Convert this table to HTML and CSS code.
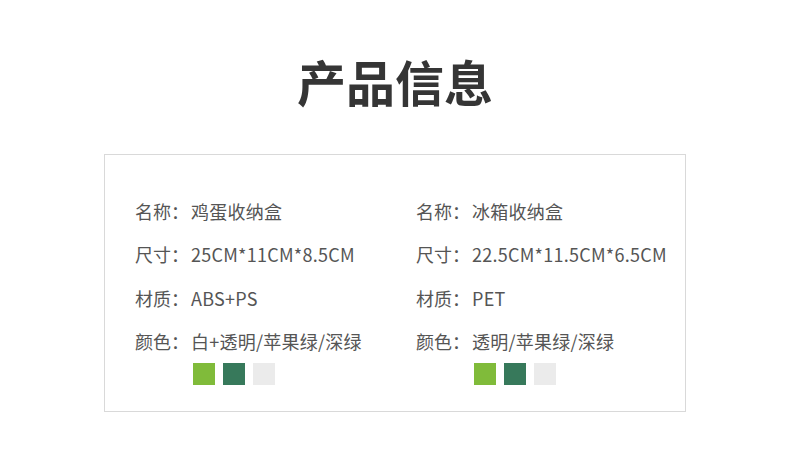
FILE: index.html
```html
<!DOCTYPE html>
<html lang="zh">
<head>
<meta charset="utf-8">
<link rel="stylesheet" href="styles.css">
</head>
<body>
<h1 class="title">产品信息</h1>
<section class="info">
  <div class="col">
    <p class="row"><span class="label">名称：</span>鸡蛋收纳盒</p>
    <p class="row"><span class="label">尺寸：</span>25CM*11CM*8.5CM</p>
    <p class="row"><span class="label">材质：</span>ABS+PS</p>
    <p class="row"><span class="label">颜色：</span>白+透明/苹果绿/深绿</p>
    <div class="swatches">
      <span class="sw apple"></span><span class="sw deep"></span><span class="sw white"></span>
    </div>
  </div>
  <div class="col">
    <p class="row"><span class="label">名称：</span>冰箱收纳盒</p>
    <p class="row"><span class="label">尺寸：</span>22.5CM*11.5CM*6.5CM</p>
    <p class="row"><span class="label">材质：</span>PET</p>
    <p class="row"><span class="label">颜色：</span>透明/苹果绿/深绿</p>
    <div class="swatches">
      <span class="sw apple"></span><span class="sw deep"></span><span class="sw white"></span>
    </div>
  </div>
</section>
</body>
</html>
```
FILE: styles.css
```css
html, body {
  margin: 0;
  padding: 0;
  background: #ffffff;
}
body {
  width: 790px;
  height: 460px;
  font-family: "Noto Sans CJK SC", "Noto Sans", sans-serif;
  color: #555555;
}
.title {
  margin: 0;
  padding-top: 48px;
  height: 154px;
  box-sizing: border-box;
  text-align: center;
  font-size: 49px;
  line-height: 66px;
  font-weight: 700;
  color: #353535;
}
.info {
  margin-left: 104px;
  width: 582px;
  height: 258px;
  box-sizing: border-box;
  border: 1px solid #d9d9d9;
  padding: 35px 0 0 30px;
  display: grid;
  grid-template-columns: 281px 1fr;
  align-content: start;
}
.row {
  margin: 0;
  font-size: 18px;
  letter-spacing: 0.25px;
  line-height: 43.3px;
  white-space: nowrap;
}
.label {
  display: inline-block;
  width: 56px;
  letter-spacing: 0;
}
.swatches {
  display: flex;
  gap: 8px;
  padding-left: 58px;
}
.sw {
  width: 22px;
  height: 22px;
  display: block;
}
.apple { background: #80bb3a; }
.deep { background: #37795b; }
.white { background: #ebebeb; }
```
